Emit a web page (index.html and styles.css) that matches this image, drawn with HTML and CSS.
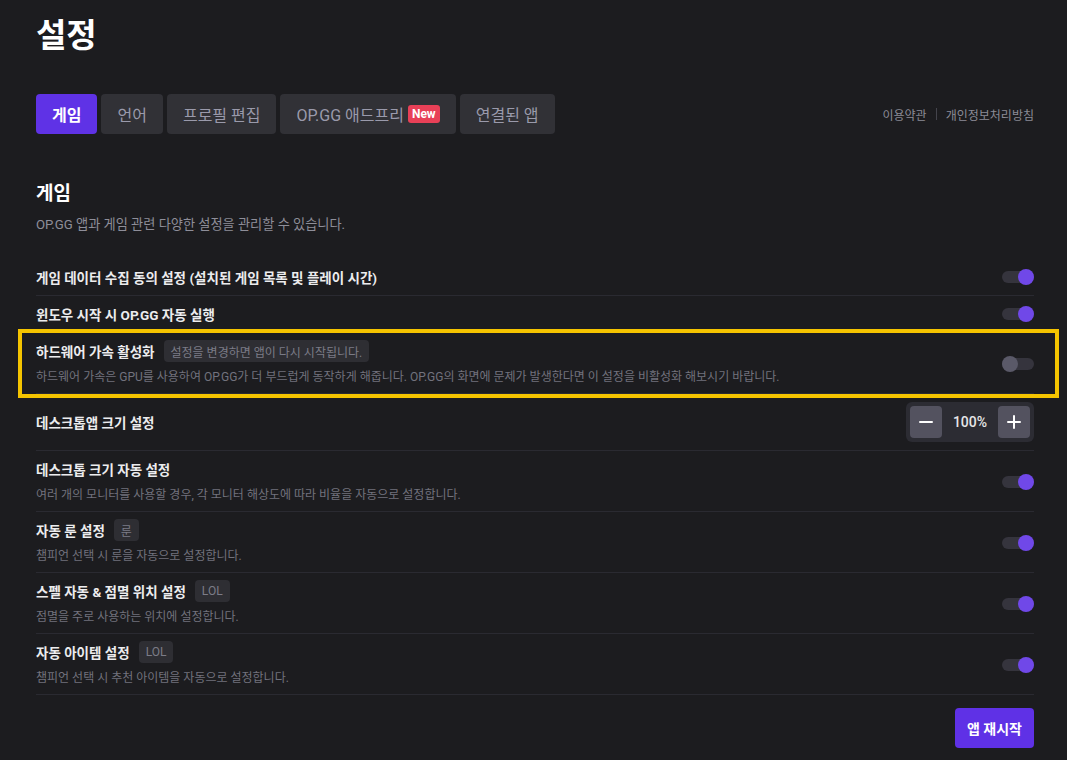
FILE: index.html
```html
<!DOCTYPE html>
<html lang="ko">
<head>
<meta charset="utf-8">
<title>설정</title>
<link rel="stylesheet" href="styles.css">
</head>
<body>
<div class="page">
  <h1 class="page-title">설정</h1>

  <div class="tabbar">
    <nav class="tabs">
      <button class="tab active">게임</button>
      <button class="tab">언어</button>
      <button class="tab">프로필 편집</button>
      <button class="tab">OP.GG 애드프리 <span class="new">New</span></button>
      <button class="tab">연결된 앱</button>
    </nav>
    <div class="links">
      <a>이용약관</a>
      <span class="divider"></span>
      <a>개인정보처리방침</a>
    </div>
  </div>

  <section class="section">
    <h2 class="section-title">게임</h2>
    <p class="section-desc">OP.GG 앱과 게임 관련 다양한 설정을 관리할 수 있습니다.</p>

    <div class="rows">
      <div class="row">
        <div class="info"><div class="title">게임 데이터 수집 동의 설정 (설치된 게임 목록 및 플레이 시간)</div></div>
        <span class="toggle on"><span class="knob"></span></span>
      </div>
      <div class="row">
        <div class="info"><div class="title">윈도우 시작 시 OP.GG 자동 실행</div></div>
        <span class="toggle on"><span class="knob"></span></span>
      </div>
      <div class="row highlight">
        <div class="info">
          <div class="title">하드웨어 가속 활성화 <span class="badge">설정을 변경하면 앱이 다시 시작됩니다.</span></div>
          <div class="desc">하드웨어 가속은 GPU를 사용하여 OP.GG가 더 부드럽게 동작하게 해줍니다. OP.GG의 화면에 문제가 발생한다면 이 설정을 비활성화 해보시기 바랍니다.</div>
        </div>
        <span class="toggle"><span class="knob"></span></span>
      </div>
      <div class="row zoom-row">
        <div class="info"><div class="title">데스크톱앱 크기 설정</div></div>
        <div class="zoom">
          <button class="zbtn" aria-label="축소">
            <svg width="14" height="14" viewBox="0 0 14 14"><path d="M1 7h12" stroke="#fff" stroke-width="2" stroke-linecap="round"/></svg>
          </button>
          <span class="zval">100%</span>
          <button class="zbtn" aria-label="확대">
            <svg width="14" height="14" viewBox="0 0 14 14"><path d="M1 7h12M7 1v12" stroke="#fff" stroke-width="2" stroke-linecap="round"/></svg>
          </button>
        </div>
      </div>
      <div class="row">
        <div class="info">
          <div class="title">데스크톱 크기 자동 설정</div>
          <div class="desc">여러 개의 모니터를 사용할 경우, 각 모니터 해상도에 따라 비율을 자동으로 설정합니다.</div>
        </div>
        <span class="toggle on"><span class="knob"></span></span>
      </div>
      <div class="row">
        <div class="info">
          <div class="title">자동 룬 설정 <span class="badge">룬</span></div>
          <div class="desc">챔피언 선택 시 룬을 자동으로 설정합니다.</div>
        </div>
        <span class="toggle on"><span class="knob"></span></span>
      </div>
      <div class="row">
        <div class="info">
          <div class="title">스펠 자동 &amp; 점멸 위치 설정 <span class="badge">LOL</span></div>
          <div class="desc">점멸을 주로 사용하는 위치에 설정합니다.</div>
        </div>
        <span class="toggle on"><span class="knob"></span></span>
      </div>
      <div class="row">
        <div class="info">
          <div class="title">자동 아이템 설정 <span class="badge">LOL</span></div>
          <div class="desc">챔피언 선택 시 추천 아이템을 자동으로 설정합니다.</div>
        </div>
        <span class="toggle on"><span class="knob"></span></span>
      </div>
    </div>

    <div class="actions">
      <button class="restart">앱 재시작</button>
    </div>
  </section>
</div>
</body>
</html>
```

FILE: styles.css
```css
* { box-sizing: border-box; }

html, body {
  margin: 0;
  padding: 0;
  background: #1c1c1f;
}

body {
  font-family: Roboto, "Noto Sans CJK KR", "Noto Sans", sans-serif;
  color: #e8e8ea;
  height: 760px;
  overflow: hidden;
}

.page {
  padding: 14px 33px 0 36px;
}

.page-title {
  margin: 0;
  font-size: 33px;
  line-height: 44px;
  font-weight: 700;
  color: #ffffff;
}

.tabbar {
  margin-top: 36px;
  display: flex;
  justify-content: space-between;
  align-items: center;
}

.tabs {
  display: flex;
  gap: 4px;
}

.tab {
  height: 40px;
  padding: 0 16px;
  border: 0;
  border-radius: 4px;
  background: #313136;
  color: #9a9aab;
  font-family: inherit;
  font-size: 16px;
  display: flex;
  align-items: center;
  gap: 4px;
}

.tab.active {
  background: #5f32e6;
  color: #ffffff;
  font-weight: 700;
}

.new {
  display: inline-flex;
  align-items: center;
  height: 18px;
  padding: 0 4px;
  border-radius: 3px;
  background: #e84057;
  color: #ffffff;
  font-size: 12px;
  font-weight: 700;
}

.links {
  display: flex;
  align-items: center;
  gap: 9px;
  font-size: 12px;
  color: #8b8b96;
}

.divider {
  width: 1px;
  height: 12px;
  background: #44444c;
}

.section {
  margin-top: 46px;
}

.section-title {
  margin: 0;
  font-size: 19px;
  line-height: 28px;
  font-weight: 700;
  color: #ffffff;
}

.section-desc {
  margin: 7px 0 0;
  font-size: 13.2px;
  line-height: 20px;
  color: #8e8e99;
}

.rows {
  margin-top: 24px;
}

.row {
  position: relative;
  display: flex;
  align-items: center;
  justify-content: space-between;
  padding: 8px 0;
  border-bottom: 1px solid #2a2a31;
}

.row:has(.desc) {
  padding-bottom: 7px;
}

.highlight::after {
  content: "";
  position: absolute;
  left: -18px;
  right: -25px;
  top: -4px;
  bottom: -5px;
  border: 4px solid #f5c400;
  pointer-events: none;
}

.title {
  display: flex;
  align-items: center;
  gap: 9px;
  height: 20px;
  font-size: 13.5px;
  font-weight: 700;
  color: #ececee;
}

.badge {
  display: inline-flex;
  align-items: center;
  height: 22px;
  padding: 0 7px;
  border-radius: 4px;
  background: #2e2e33;
  color: #7c7c87;
  font-size: 12px;
  font-weight: 400;
}

.desc {
  margin-top: 7px;
  font-size: 12px;
  line-height: 18px;
  color: #72727d;
}

.toggle {
  position: relative;
  width: 32px;
  height: 12px;
  border-radius: 6px;
  background: #35343d;
  flex-shrink: 0;
}

.knob {
  position: absolute;
  top: -2px;
  left: 0;
  width: 16px;
  height: 16px;
  border-radius: 50%;
  background: #5a5968;
}

.toggle.on .knob {
  left: 16px;
  background: #7048e8;
}

.zoom {
  display: flex;
  align-items: center;
  width: 128px;
  height: 40px;
  padding: 4px;
  border-radius: 6px;
  background: #2c2c33;
}

.zbtn {
  width: 32px;
  height: 32px;
  border: 0;
  border-radius: 4px;
  background: #53525f;
  padding: 0;
  display: flex;
  align-items: center;
  justify-content: center;
}

.zval {
  flex: 1;
  text-align: center;
  font-size: 14px;
  font-weight: 500;
  color: #e6e6e8;
}

.actions {
  display: flex;
  justify-content: flex-end;
  margin-top: 13px;
}

.restart {
  height: 40px;
  padding: 0 12px;
  border: 0;
  border-radius: 4px;
  background: #5f31e6;
  color: #ffffff;
  font-family: inherit;
  font-size: 14px;
  font-weight: 700;
}
```
